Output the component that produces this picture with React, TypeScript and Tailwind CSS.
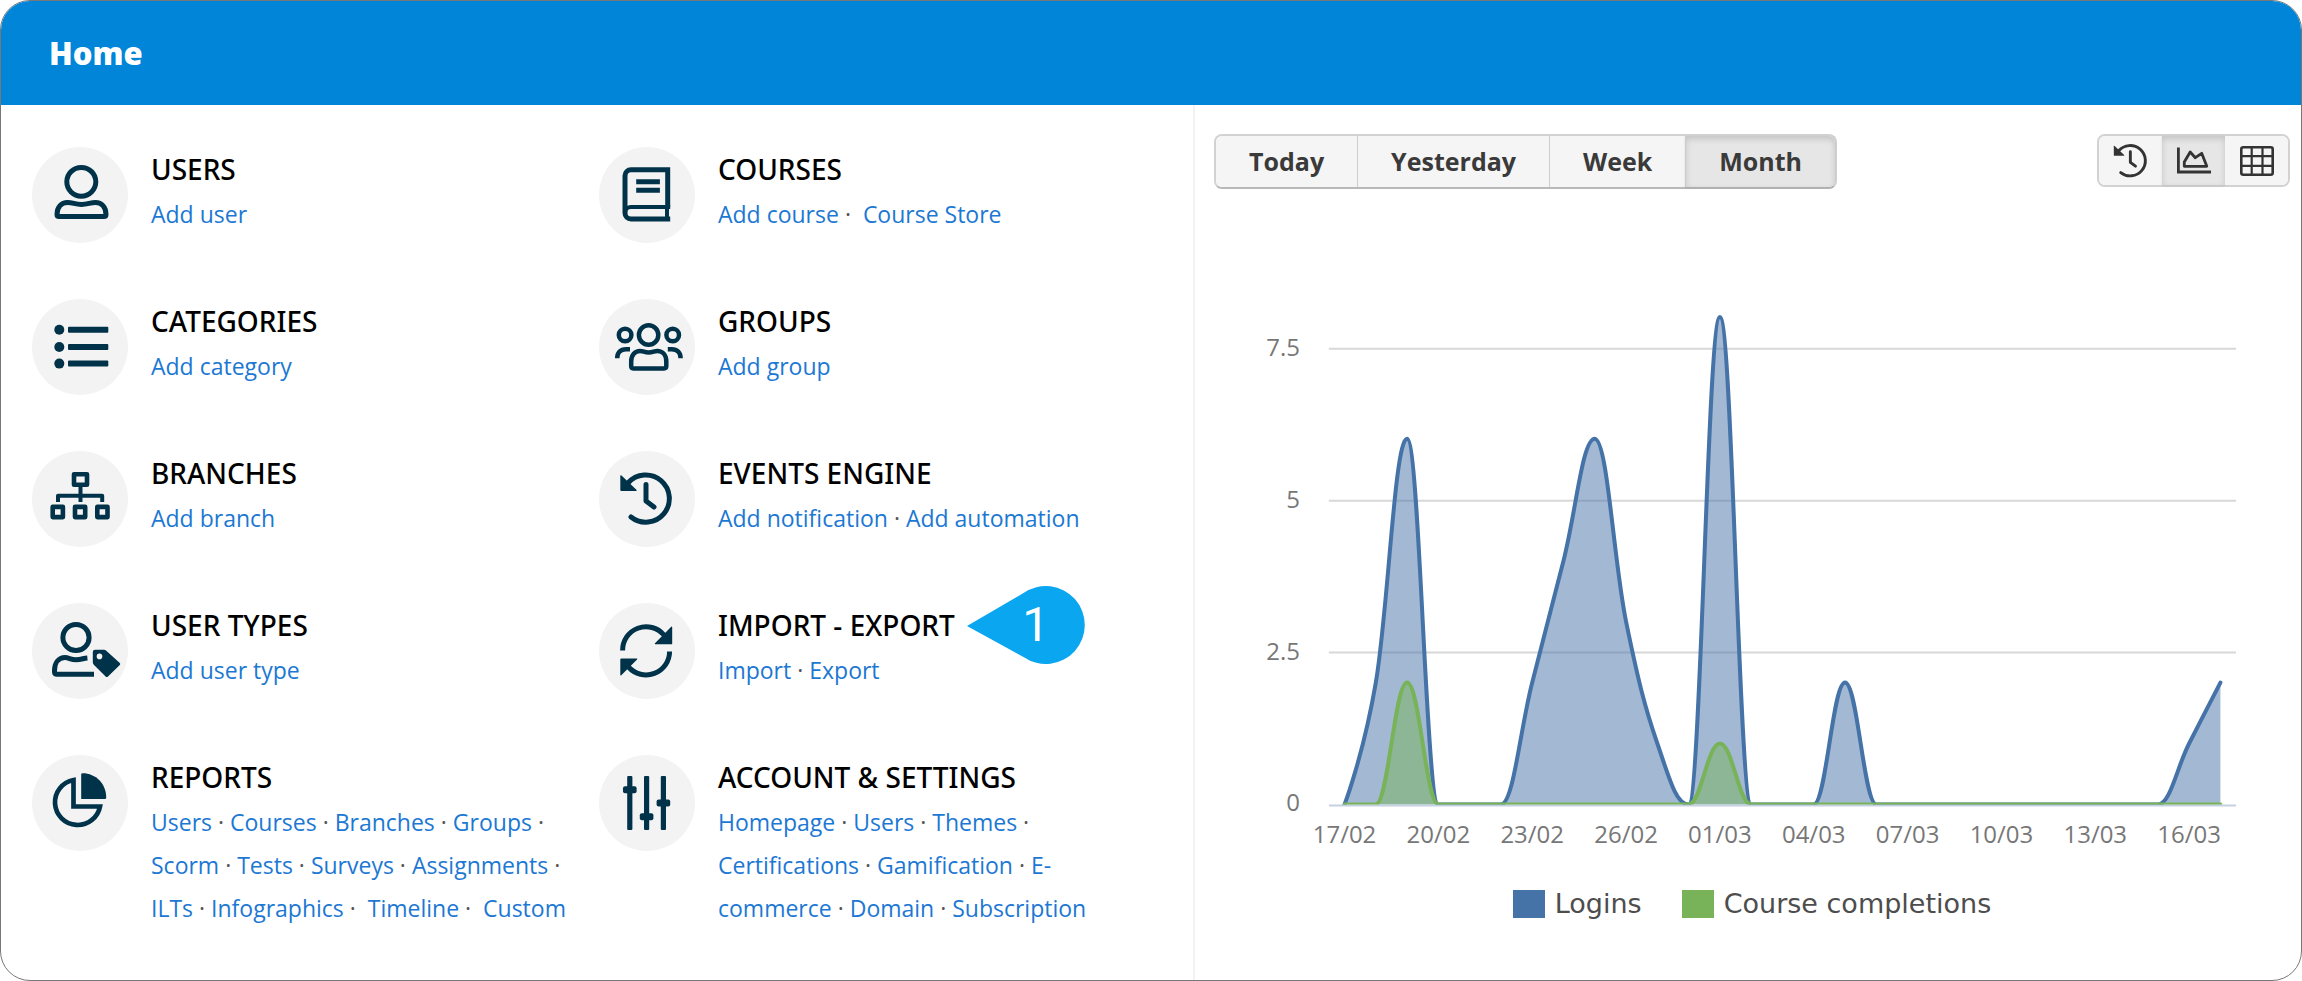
import type { ReactNode } from "react"
import clsx from "clsx"

/* ---------- Icons ---------- */

function TileIcon({ children }: { children: ReactNode }) {
  return (
    <svg
      viewBox="0 0 96 96"
      className="h-24 w-24 shrink-0 rounded-full bg-[#f3f3f3] text-[#003349]"
      fill="none"
      stroke="currentColor"
      strokeWidth="5"
      aria-hidden="true"
    >
      {children}
    </svg>
  )
}

const HistoryShape = () => (
  <>
    <path d="M29 32A23.6 23.6 0 1 1 32 66" strokeLinecap="round" />
    <path d="M47 33.5V50l8 6" strokeLinecap="round" strokeLinejoin="round" />
    <path d="M21.3 25.2q0-1.6 1.2-.6L37.4 38.8q1 1.2-.6 1.2H22.3q-1 0-1-1z" fill="currentColor" stroke="none" />
  </>
)

const icons = {
  users: (
    <>
      <ellipse cx="49.3" cy="34.8" rx="14.5" ry="14.4" />
      <path
        d="M27 69.5H72Q74 69.5 74 67.5C74 60 69.5 55.5 63.5 55.5C58 55.5 56 57.5 49.3 57.5C43 57.5 41 55.5 35.5 55.5C29.5 55.5 25 60 25 67.5Q25 69.5 27 69.5Z"
        strokeLinejoin="round"
      />
    </>
  ),
  courses: (
    <>
      <path d="M68.7 60V22.8H32a6 6 0 0 0-6 6V66a6 6 0 0 0 6 6H71.2" />
      <path d="M26 66a6 6 0 0 1 6-6H71.2" strokeWidth="4" />
      <path d="M68 60V72" strokeWidth="4" />
      <path d="M37.2 34.8H60.9M37.2 43.2H60.9" />
    </>
  ),
  categories: (
    <g fill="currentColor" stroke="none">
      {[30.8, 48, 64.6].map((y) => (
        <g key={y}>
          <circle cx="27.3" cy={y} r="5" />
          <rect x="36" y={y - 3} width="40.3" height="6" rx="1" />
        </g>
      ))}
    </g>
  ),
  groups: (
    <g strokeWidth="4.5">
      <circle cx="49.6" cy="36" r="9.7" />
      <circle cx="26.1" cy="36" r="6.3" />
      <circle cx="73.7" cy="36" r="6.3" />
      <path
        d="M34.3 69.4H65Q67.3 69.4 67.3 67V62.5C67.3 56 63.5 52 58.3 52C55 52 54 53.5 49.6 53.5C45.3 53.5 44.5 52 41 52C36 52 32.2 56 32.2 62.5V67Q32.2 69.4 34.3 69.4Z"
        strokeLinejoin="round"
      />
      <path d="M18.2 59.2C18.2 53.5 21.5 50.3 27 50.3H31M81.6 59.2C81.6 53.5 78.3 50.3 72.8 50.3H68.8" />
    </g>
  ),
  branches: (
    <g strokeWidth="4.6" strokeLinejoin="round">
      <rect x="42" y="23.3" width="13" height="10.4" />
      <path d="M48.5 34V51M26 51V44.7H70.2V51" strokeWidth="4" />
      <rect x="20.7" y="55.9" width="10.2" height="10.2" />
      <rect x="43" y="55.9" width="10.2" height="10.2" />
      <rect x="65.3" y="55.9" width="10.2" height="10.2" />
    </g>
  ),
  events: <HistoryShape />,
  userTypes: (
    <>
      <circle cx="44" cy="34.5" r="13.1" />
      <path
        d="M55.4 54.9C51 55.3 49.5 56.7 44 56.7C38.5 56.7 37 54.6 33 54.6C26.5 54.6 22.5 60 22.5 68V69Q22.5 71.3 25 71.3H62"
        strokeLinejoin="round"
      />
      <path
        d="M60.8 49q0-2.3 2.3-2.3H72q1.2 0 2 .8L87.8 60q1 1 0 2L76 73.5q-1.2 1.2-2.4 0L62 62q-1.2-1.2-1.2-2.5Z"
        fill="currentColor"
        stroke="none"
      />
      <circle cx="67.5" cy="53.4" r="2.8" fill="#f3f3f3" stroke="none" />
    </>
  ),
  sync: (
    <>
      <path d="M23.6 47.5A23.5 23.5 0 0 1 65 32M70.6 48.5A23.5 23.5 0 0 1 29.5 64" />
      <path
        d="M73.2 24.3V40.4q0 .9-.9.9H56.4q-1.2 0-.4-1L72.2 23.8q1-.8 1 .5ZM21.3 71.7V56.3q0-.9.9-.9H37.6q1.4 0 .5 1L22.3 72.2q-1 .8-1-.5Z"
        fill="currentColor"
        stroke="none"
      />
    </>
  ),
  reports: (
    <>
      <path d="M41.5 25V51.5H68A22.7 22.7 0 1 1 41.5 25Z" strokeWidth="4.7" />
      <path
        d="M49.2 19.5Q49.2 18.3 50.5 18.3C64 18.3 74.2 29 74.2 42.5Q74.2 44 73 44H49.2Z"
        fill="currentColor"
        stroke="none"
      />
    </>
  ),
  settings: (
    <g fill="currentColor" stroke="none">
      {[
        [30.8, 34.7],
        [47.6, 61.7],
        [64.4, 48],
      ].map(([x, y]) => (
        <g key={x}>
          <rect x={x - 2.6} y="21" width="5.2" height="54" rx="1" />
          <rect x={x - 6.8} y={y - 3.5} width="13.6" height="7" rx="2" />
        </g>
      ))}
    </g>
  ),
}

/* ---------- Menu tiles ---------- */

type Tile = {
  title: string
  icon: keyof typeof icons
  links: string[]
  // links that carry an extra space in front of them
  spaced?: string[]
  step?: number
}

const tiles: Tile[] = [
  { title: "USERS", icon: "users", links: ["Add user"] },
  { title: "COURSES", icon: "courses", links: ["Add course", "Course Store"], spaced: ["Course Store"] },
  { title: "CATEGORIES", icon: "categories", links: ["Add category"] },
  { title: "GROUPS", icon: "groups", links: ["Add group"] },
  { title: "BRANCHES", icon: "branches", links: ["Add branch"] },
  { title: "EVENTS ENGINE", icon: "events", links: ["Add notification", "Add automation"] },
  { title: "USER TYPES", icon: "userTypes", links: ["Add user type"] },
  { title: "IMPORT - EXPORT", icon: "sync", links: ["Import", "Export"], step: 1 },
  {
    title: "REPORTS",
    icon: "reports",
    links: [
      "Users",
      "Courses",
      "Branches",
      "Groups",
      "Scorm",
      "Tests",
      "Surveys",
      "Assignments",
      "ILTs",
      "Infographics",
      "Timeline",
      "Custom",
    ],
    spaced: ["Timeline", "Custom"],
  },
  {
    title: "ACCOUNT & SETTINGS",
    icon: "settings",
    links: ["Homepage", "Users", "Themes", "Certifications", "Gamification", "E-commerce", "Domain", "Subscription"],
  },
]

function StepMarker({ step }: { step: number }) {
  return (
    <span className="absolute top-1/2 left-full ml-3 flex h-20 w-[118px] -translate-y-1/2 items-center justify-center">
      <svg viewBox="0 0 118 80" className="absolute inset-0 h-full w-full" aria-hidden="true">
        <path d="M0 41L56.5 8A39 39 0 1 1 56.5 72Z" fill="#0aa6ef" />
      </svg>
      <span className="relative pl-5 font-['Roboto',sans-serif] text-5xl font-normal text-white">{step}</span>
    </span>
  )
}

function MenuTile({ tile }: { tile: Tile }) {
  return (
    <section className="flex min-h-[152px] gap-[23px] pr-3">
      <TileIcon>{icons[tile.icon]}</TileIcon>
      <div>
        <h2 className="relative w-fit font-['Noto_Sans',sans-serif] text-[28px] leading-[44px] font-medium text-black">
          {tile.title}
          {tile.step && <StepMarker step={tile.step} />}
        </h2>
        <p className="mt-0.5 text-[23px] leading-[43px] text-[#555]">
          {tile.links.map((link, i) => (
            <span key={link}>
              {i > 0 && (tile.spaced?.includes(link) ? "\u00a0· \u00a0" : "\u00a0· ")}
              <a href="#" className="text-[#1c78d3] hover:underline">
                {link}
              </a>
            </span>
          ))}
        </p>
      </div>
    </section>
  )
}

/* ---------- Toolbar ---------- */

const pressed =
  "bg-[#e6e6e6] shadow-[inset_0_3px_6px_rgba(0,0,0,0.15),0_1px_3px_rgba(0,0,0,0.08)]"

function PeriodButtons() {
  return (
    <div className="flex rounded-lg border-2 border-[#d2d2d2] border-b-[#b8b8b8]">
      {["Today", "Yesterday", "Week", "Month"].map((label) => (
        <button
          key={label}
          type="button"
          aria-pressed={label === "Month"}
          className={clsx(
            "border-l border-[#ccc] px-[33px] text-[25px] leading-[51px] font-bold text-[#3a3a3a] first:rounded-l-md first:border-l-0 last:rounded-r-md",
            label === "Month" ? pressed : "bg-[#f5f5f5]"
          )}
        >
          {label}
        </button>
      ))}
    </div>
  )
}

function ViewButtons() {
  const base = "flex h-[49px] w-[63px] items-center justify-center text-[#333]"
  return (
    <div className="flex rounded-lg border-2 border-[#d2d2d2]">
      <button type="button" aria-label="Timeline" className={clsx(base, "rounded-l-md bg-[#f5f5f5]")}>
        <svg viewBox="20 20 56 56" className="h-9 w-9" fill="none" stroke="currentColor" strokeWidth="4.5">
          <HistoryShape />
        </svg>
      </button>
      <button type="button" aria-label="Chart" aria-pressed="true" className={clsx(base, pressed)}>
        <svg viewBox="0 0 34 27" className="h-[27px] w-[34px]" fill="none" stroke="currentColor" strokeWidth="2.8">
          <path d="M1.4 .5V25H34" />
          <path d="M7.3 19.3V15L13.2 5L18.3 10.7L24.7 6.3L29.8 19.3Z" strokeLinejoin="round" />
        </svg>
      </button>
      <button type="button" aria-label="Table" className={clsx(base, "rounded-r-md bg-[#f5f5f5]")}>
        <svg viewBox="0 0 34 30" className="h-[30px] w-[34px]" fill="none" stroke="currentColor" strokeWidth="2.6">
          <rect x="1.3" y="1.3" width="31.4" height="27.4" rx="2" />
          <path d="M1 10.2H33M1 19.8H33M11.7 1V29M22.5 1V29" strokeWidth="2.2" />
        </svg>
      </button>
    </div>
  )
}

/* ---------- Chart ---------- */

const logins = [0, 2, 6, 0, 0, 0, 2, 4, 6, 3, 1, 0, 8, 0, 0, 0, 2, 0, 0, 0, 0, 0, 0, 0, 0, 0, 0, 1, 2]
const completions = logins.map((_, i) => (i === 2 ? 2 : i === 12 ? 1 : 0))
const days = ["17/02", "20/02", "23/02", "26/02", "01/03", "04/03", "07/03", "10/03", "13/03", "16/03"]

const LEFT = 115
const WIDTH = 908
const ZERO = 616
const UNIT = 61
const STEP = WIDTH / logins.length

const px = (i: number) => LEFT + STEP * (i + 0.5)
const py = (v: number) => ZERO - v * UNIT

// Smooth line through the points that never overshoots a local minimum or maximum
function spline(values: number[]) {
  const pts = values.map((v, i) => ({ x: px(i), y: py(v) }))
  const controls = pts.map((p, i) => {
    const prev = pts[i - 1]
    const next = pts[i + 1]
    if (!prev || !next) return { lx: p.x, ly: p.y, rx: p.x, ry: p.y }
    const lx = (1.5 * p.x + prev.x) / 2.5
    const rx = (1.5 * p.x + next.x) / 2.5
    let ly = (1.5 * p.y + prev.y) / 2.5
    let ry = (1.5 * p.y + next.y) / 2.5
    const fix = ((ry - ly) * (rx - p.x)) / (rx - lx) + p.y - ry
    ly += fix
    ry += fix
    const clampL = Math.min(Math.max(ly, Math.min(prev.y, p.y)), Math.max(prev.y, p.y))
    if (clampL !== ly) {
      ly = clampL
      ry = 2 * p.y - ly
    }
    const clampR = Math.min(Math.max(ry, Math.min(next.y, p.y)), Math.max(next.y, p.y))
    if (clampR !== ry) {
      ry = clampR
      ly = 2 * p.y - ry
    }
    return { lx, ly, rx, ry }
  })
  return pts
    .map((p, i) =>
      i === 0
        ? `M${p.x} ${p.y}`
        : `C${controls[i - 1].rx} ${controls[i - 1].ry} ${controls[i].lx} ${controls[i].ly} ${p.x} ${p.y}`
    )
    .join("")
}

function Series({ values, color }: { values: number[]; color: string }) {
  const line = spline(values)
  return (
    <g clipPath="url(#plot)">
      <path d={`${line}L${px(values.length - 1)} ${ZERO}L${px(0)} ${ZERO}Z`} fill={color} fillOpacity="0.5" />
      <path d={line} fill="none" stroke={color} strokeWidth="4" strokeLinejoin="round" strokeLinecap="round" />
    </g>
  )
}

function ActivityChart() {
  return (
    <svg viewBox="0 0 1077 672" className="w-full" role="img" aria-label="Logins and course completions">
      <clipPath id="plot">
        <rect x={LEFT} y="0" width={WIDTH} height={ZERO} />
      </clipPath>
      {[2.5, 5, 7.5].map((v) => (
        <path key={v} d={`M${LEFT} ${ZERO - (v / 2.5) * 152}h${WIDTH}`} stroke="#d8d8d8" strokeWidth="2" />
      ))}
      <path d={`M${LEFT} ${ZERO + 1}h${WIDTH}`} stroke="#c5d1e2" strokeWidth="2" />
      <Series values={logins} color="#4572a7" />
      <Series values={completions} color="#78b359" />
      <g fill="#777" fontSize="24">
        {[0, 2.5, 5, 7.5].map((v) => (
          <text key={v} x="86" y={ZERO + 7 - (v / 2.5) * 152} textAnchor="end">
            {v}
          </text>
        ))}
        {days.map((day, i) => (
          <text key={day} x={px(i * 3)} y="655" textAnchor="middle">
            {day}
          </text>
        ))}
      </g>
    </svg>
  )
}

function Legend() {
  return (
    <ul className="mt-[26px] flex justify-center gap-10 font-['DejaVu_Sans',sans-serif] text-[27px] leading-9 text-[#4d4d4d]">
      <li className="flex items-center gap-[10px]">
        <span className="h-7 w-8 bg-[#4572a7]" />
        Logins
      </li>
      <li className="flex items-center gap-[10px]">
        <span className="h-7 w-8 bg-[#78b359]" />
        Course completions
      </li>
    </ul>
  )
}

export default function App() {
  return (
    <div className="flex min-h-screen flex-col overflow-hidden rounded-[30px] border border-[#777] bg-white font-['Open_Sans','Noto_Sans',sans-serif]">
      <header className="flex h-[104px] items-center bg-[#0085d9] px-12">
        <h1 className="text-[31px] font-extrabold text-white">Home</h1>
      </header>

      <main className="grid flex-1 grid-cols-[1194fr_1106fr]">
        <div className="grid grid-cols-2 content-start border-r-2 border-[#f3f3f3] pt-[42px] pr-[27px] pl-[31px]">
          {tiles.map((tile) => (
            <MenuTile key={tile.title} tile={tile} />
          ))}
        </div>

        <div className="pt-[29px] pr-[11px] pl-[19px]">
          <div className="flex items-start justify-between">
            <PeriodButtons />
            <ViewButtons />
          </div>
          <ActivityChart />
          <Legend />
        </div>
      </main>
    </div>
  )
}
